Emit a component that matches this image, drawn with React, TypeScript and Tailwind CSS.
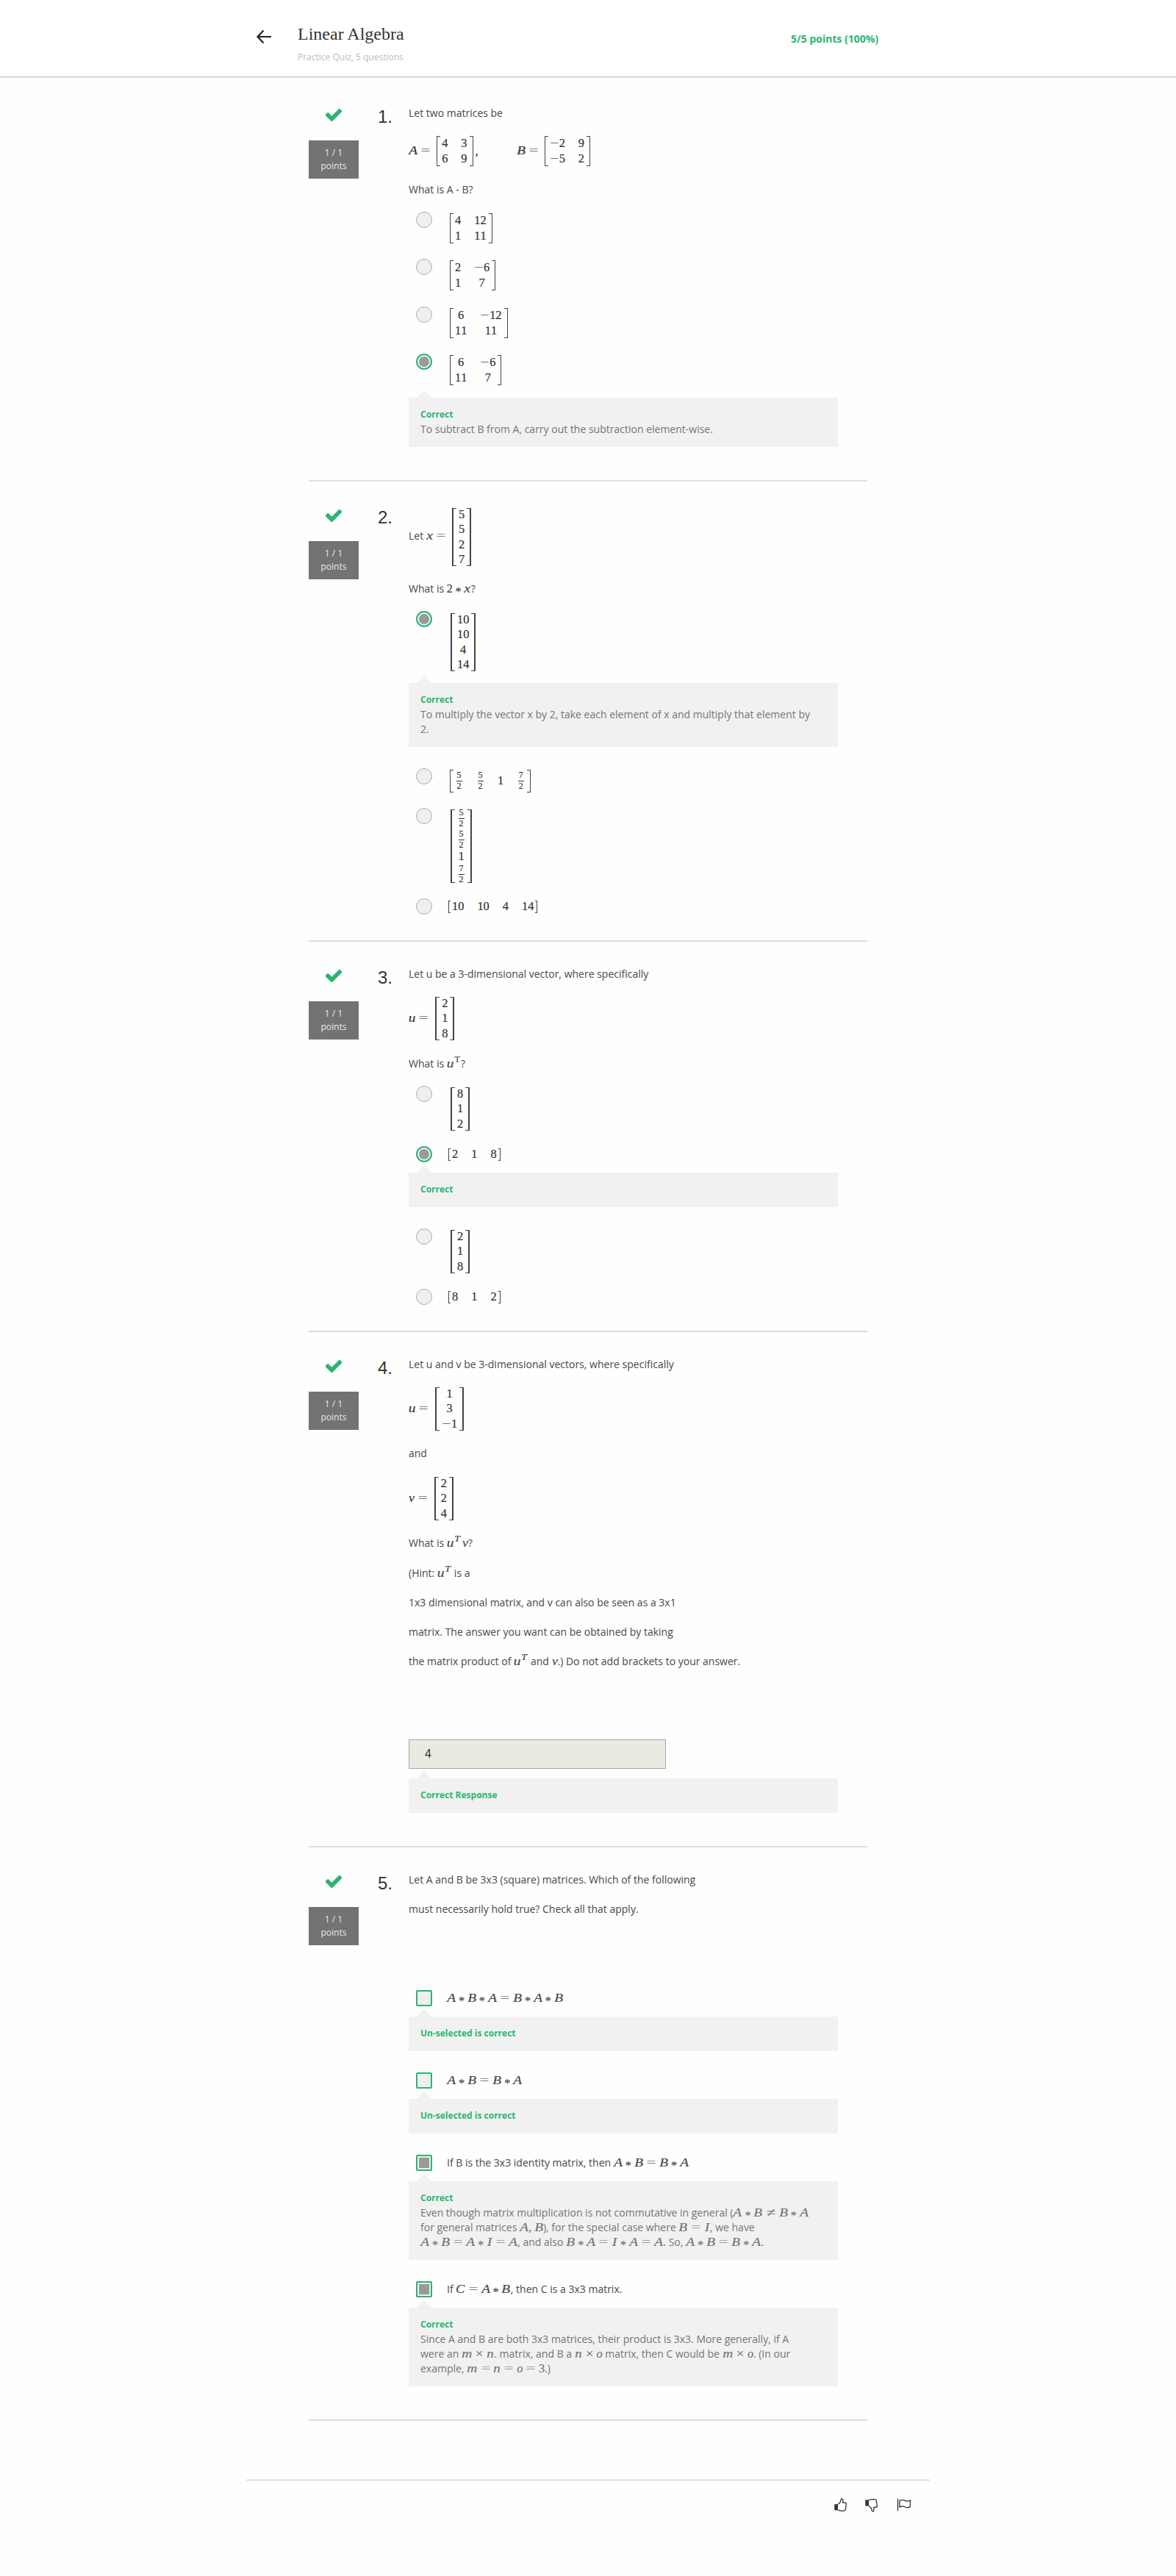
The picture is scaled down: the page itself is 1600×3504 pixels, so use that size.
import React from "react";
import type { ReactNode } from "react";

const GLYPHS: Record<string, string> = {
  A: "w-[0.75em] scale-x-[1.18] italic",
  B: "w-[0.76em] scale-x-[1.18] italic",
  C: "w-[0.76em] scale-x-[1.12] italic",
  I: "w-[0.5em] scale-x-[1.2] italic",
  m: "w-[0.878em] scale-x-[1.18] italic",
  n: "w-[0.6em] scale-x-[1.15] italic",
  o: "w-[0.485em] italic",
  u: "w-[0.57em] scale-x-[1.18] italic",
  v: "w-[0.485em] scale-x-[1.1] italic",
  x: "w-[0.57em] scale-x-[1.2] italic",
  "=": "w-[1.334em] scale-x-[1.35] opacity-70",
  "≠": "w-[1.334em] scale-x-[1.35]",
  "×": "w-[1.222em] scale-x-[1.15]",
  "−": "w-[0.778em] scale-x-[1.3] opacity-75",
  "*": "w-[0.944em] relative top-[0.22em]",
  ",": "w-[0.444em] text-left",
};

function M({ children }: { children: string }) {
  return (
    <span className="inline-block whitespace-nowrap font-['Liberation_Serif',serif] text-[16.4px] leading-none [-webkit-text-stroke:0.2px]">
      {children.split("").map((c, i) => (
        <span key={i} className={"inline-block text-center " + (GLYPHS[c] ?? "w-[0.5em]")}>
          {c}
        </span>
      ))}
    </span>
  );
}

function Sup({ upright = false }: { upright?: boolean }) {
  return (
    <span
      className={
        "inline-block w-[10px] text-center align-[7px] font-['Liberation_Serif',serif] text-[12px] leading-[0] [-webkit-text-stroke:0.2px] " +
        (upright ? "" : "scale-x-[1.15] italic")
      }
    >
      T
    </span>
  );
}

function Frac({ a, b }: { a: string; b: string }) {
  return (
    <span className="flex w-[11px] flex-col items-center text-[12px] leading-[13px] [-webkit-text-stroke:0.2px]">
      <span>{a}</span>
      <span className="mt-px h-px w-2 bg-[#333]" />
      <span>{b}</span>
    </span>
  );
}

type Cell = string | [string, string];

function Matrix({
  cols,
  height,
  kind = "thin",
  cell = "h-[20.5px]",
  className = "",
}: {
  cols: Cell[][];
  height: string;
  kind?: "thin" | "thick" | "row";
  cell?: string;
  className?: string;
}) {
  const edge =
    kind === "row"
      ? "w-[3px] border-y border-[#444]"
      : kind === "thin"
        ? "w-[5px] border-y border-[#444]"
        : "w-[6px] border-y border-[#444]";
  const side = kind === "thick" ? 2 : 1;
  const pad =
    kind === "row" ? "px-[2px]" : kind === "thin" ? "pl-[2px] pr-[3px]" : "px-[3px]";
  return (
    <span className={"inline-flex shrink-0 " + height + " " + className}>
      <span className={edge + (side === 2 ? " border-l-2" : " border-l")} />
      <span
        className={
          "flex items-center gap-[18px] font-['Liberation_Serif',serif] text-[16.4px] " + pad
        }
      >
        {cols.map((col, i) => (
          <span key={i} className="flex flex-col items-center">
            {col.map((c, j) => (
              <span
                key={j}
                className={
                  "flex items-center leading-[20px] " +
                  (typeof c === "string" ? cell : "h-[29.3px]")
                }
              >
                {typeof c === "string" ? <M>{c}</M> : <Frac a={c[0]} b={c[1]} />}
              </span>
            ))}
          </span>
        ))}
      </span>
      <span className={edge + (side === 2 ? " border-r-2" : " border-r")} />
    </span>
  );
}

function Question({
  n,
  height,
  children,
}: {
  n: number;
  height: string;
  children: ReactNode;
}) {
  return (
    <section
      className={
        "mx-auto flex w-[760px] border-b-2 border-[#dedede] pt-[34px] " + height
      }
    >
      <div className="flex w-[68px] flex-col items-center">
        <svg className="-mt-px text-[#2ab573]" width="26" height="26" viewBox="0 0 1792 1792" fill="currentColor">
          <path d="M1671 566q0 40-28 68l-724 724-136 136q-28 28-68 28t-68-28l-136-136-362-362q-28-28-28-68t28-68l136-136q28-28 68-28t68 28l294 295 656-657q28-28 68-28t68 28l136 136q28 28 28 68z" />
        </svg>
        <div className="mt-[22px] flex h-[52px] w-full flex-col items-center justify-center bg-[#737373] text-xs leading-[18px] text-[#e8e8e8]">
          <span>1 / 1</span>
          <span>points</span>
        </div>
      </div>
      <div className="ml-[26px] w-[42px] font-['Liberation_Sans',sans-serif] text-2xl leading-[29px] text-[#333]">
        {n}.
      </div>
      <div className="flex w-[584px] flex-col items-start">{children}</div>
    </section>
  );
}

function Line({ children, className = "" }: { children: ReactNode; className?: string }) {
  return (
    <p className={"h-5 whitespace-nowrap leading-5 text-[#484848] " + className}>{children}</p>
  );
}

function Equation({ children, className = "" }: { children: ReactNode; className?: string }) {
  return <div className={"flex items-center text-[#333] " + className}>{children}</div>;
}

function Option({
  height,
  checked = false,
  square = false,
  children,
}: {
  height: string;
  checked?: boolean;
  square?: boolean;
  children: ReactNode;
}) {
  const shape = square ? "rounded-[2px]" : "rounded-full";
  const ring =
    square || checked ? "border-2 border-[#2ab573]" : "border border-[#adadad]";
  return (
    <div className={"flex items-start pl-2.5 text-[#333] " + height}>
      <span
        className={
          "mr-5 flex size-[22px] shrink-0 items-center justify-center bg-[#efefef] " +
          shape +
          " " +
          ring
        }
      >
        {checked && (
          <span className={"size-3.5 bg-[#9a9a9a] " + (square ? "" : "rounded-full")} />
        )}
      </span>
      {children}
    </div>
  );
}

function Feedback({
  title = "Correct",
  children,
  className = "",
}: {
  title?: string;
  children?: ReactNode;
  className?: string;
}) {
  return (
    <div className={"relative w-full bg-[#f1f1f1] px-4 pt-[13px] pb-3.5 " + className}>
      <span className="absolute -top-2.5 left-[11px] border-x-[10px] border-b-[10px] border-x-transparent border-b-[#f1f1f1]" />
      <div className="h-5 text-xs leading-[20px] font-bold text-[#2ab573]">{title}</div>
      {children && <div className="whitespace-nowrap leading-5 text-[#757575]">{children}</div>}
    </div>
  );
}

export default function App() {
  return (
    <div className="h-[3504px] w-[1600px] bg-[#fefefe] font-['Open_Sans',sans-serif] text-sm">
      <header className="flex h-[105px] border-b border-[#c9c9c9] bg-white shadow-[0_1px_0_#e9e9e9]">
        <svg className="mt-10 ml-[348px]" width="22" height="20" viewBox="0 0 22 20" fill="none" stroke="#222" strokeWidth="2.2">
          <path d="M21 10H2.5M10.5 1.5L2.5 10L10.5 18.5" />
        </svg>
        <div className="ml-[35px] w-[671px]">
          <h1 className="mt-[32px] font-['Liberation_Serif',serif] text-[24px] leading-[28px] text-[#333]">
            Linear Algebra
          </h1>
          <p className="mt-2 text-xs leading-5 text-[#bdbdbd]">Practice Quiz, 5 questions</p>
        </div>
        <div className="mt-[43px] text-sm leading-5 font-bold text-[#2ab573]">5/5 points (100%)</div>
      </header>
      <main className="pt-[5px]">
        <Question n={1} height="h-[545px]">
          <Line>Let two matrices be</Line>
          <Equation className="mt-[21px]">
            <M>A=</M>
            <Matrix className="ml-1" height="h-[41px]" cols={[["4", "6"], ["3", "9"]]} />
            <span className="ml-[3px] w-[56px]">
              <M>,</M>
            </span>
            <M>B=</M>
            <Matrix className="ml-1" height="h-[41px]" cols={[["−2", "−5"], ["9", "2"]]} />
          </Equation>
          <Line className="mt-[22px]">What is A - B?</Line>
          <div className="mt-5">
            <Option height="h-16">
              <Matrix className="mt-0.5 ml-1" height="h-[41px]" cols={[["4", "1"], ["12", "11"]]} />
            </Option>
            <Option height="h-[65px]">
              <Matrix className="mt-0.5 ml-1" height="h-[41px]" cols={[["2", "1"], ["−6", "7"]]} />
            </Option>
            <Option height="h-16">
              <Matrix className="mt-0.5 ml-1" height="h-[41px]" cols={[["6", "11"], ["−12", "11"]]} />
            </Option>
            <Option height="h-[60px]" checked>
              <Matrix className="mt-0.5 ml-1" height="h-[41px]" cols={[["6", "11"], ["−6", "7"]]} />
            </Option>
          </div>
          <Feedback>To subtract B from A, carry out the subtraction element-wise.</Feedback>
        </Question>

        <Question n={2} height="h-[626px]">
          <Equation className="mt-0.5">
            <span className="mb-1 whitespace-pre text-[#484848]">
              Let <M>x=</M>
            </span>
            <Matrix className="ml-1" kind="thick" height="h-[79px]" cols={[["5", "5", "2", "7"]]} />
          </Equation>
          <Line className="mt-[21px]">
            What is <M>2*x</M>?
          </Line>
          <div className="mt-5">
            <Option height="h-[98px]" checked>
              <Matrix className="mt-[3px] ml-[5px]" kind="thick" height="h-[79px]" cols={[["10", "10", "4", "14"]]} />
            </Option>
          </div>
          <Feedback>
            To multiply the vector x by 2, take each element of x and multiply that element by
            <br />
            2.
          </Feedback>
          <div className="mt-[29px]">
            <Option height="h-[54px]">
              <Matrix
                className="mt-0.5 ml-1"
                height="h-[31px]"
                cols={[[["5", "2"]], [["5", "2"]], ["1"], [["7", "2"]]]}
              />
            </Option>
            <Option height="h-[123px]">
              <Matrix
                className="mt-0.5 ml-[5px]"
                kind="thick"
                height="h-[100px]"
                cell="h-[18px]"
                cols={[[["5", "2"], ["5", "2"], "1", ["7", "2"]]]}
              />
            </Option>
            <Option height="h-[22px]">
              <Matrix className="mt-[3px] ml-[2px]" kind="row" height="h-[17px]" cols={[["10"], ["10"], ["4"], ["14"]]} />
            </Option>
          </div>
        </Question>

        <Question n={3} height="h-[531px]">
          <Line>Let u be a 3-dimensional vector, where specifically</Line>
          <Equation className="mt-[21px]">
            <span className="mb-0.5">
              <M>u=</M>
            </span>
            <Matrix className="ml-[5px]" kind="thick" height="h-[59px]" cols={[["2", "1", "8"]]} />
          </Equation>
          <Line className="mt-[22px]">
            What is <M>u</M>
            <Sup upright />?
          </Line>
          <div className="mt-5">
            <Option height="h-[82px]">
              <Matrix className="mt-0.5 ml-[5px]" kind="thick" height="h-[59px]" cols={[["8", "1", "2"]]} />
            </Option>
            <Option height="h-9" checked>
              <Matrix className="mt-[3px] ml-[2px]" kind="row" height="h-[17px]" cols={[["2"], ["1"], ["8"]]} />
            </Option>
          </div>
          <Feedback />
          <div className="mt-[29px]">
            <Option height="h-[82px]">
              <Matrix className="mt-0.5 ml-[5px]" kind="thick" height="h-[59px]" cols={[["2", "1", "8"]]} />
            </Option>
            <Option height="h-[22px]">
              <Matrix className="mt-[3px] ml-[2px]" kind="row" height="h-[17px]" cols={[["8"], ["1"], ["2"]]} />
            </Option>
          </div>
        </Question>

        <Question n={4} height="h-[701px]">
          <Line>Let u and v be 3-dimensional vectors, where specifically</Line>
          <Equation className="mt-[21px]">
            <span className="mb-0.5">
              <M>u=</M>
            </span>
            <Matrix className="ml-[5px]" kind="thick" height="h-[59px]" cols={[["1", "3", "−1"]]} />
          </Equation>
          <Line className="mt-[21px]">and</Line>
          <Equation className="mt-[22px]">
            <span className="mb-0.5">
              <M>v=</M>
            </span>
            <Matrix className="ml-[5px]" kind="thick" height="h-[59px]" cols={[["2", "2", "4"]]} />
          </Equation>
          <Line className="mt-[21px]">
            What is <M>u</M>
            <Sup />
            <span className="ml-0.5">
              <M>v</M>
            </span>
            ?
          </Line>
          <Line className="mt-[21px]">
            (Hint: <M>u</M>
            <Sup /> is a
          </Line>
          <Line className="mt-5">1x3 dimensional matrix, and v can also be seen as a 3x1</Line>
          <Line className="mt-5">matrix. The answer you want can be obtained by taking</Line>
          <Line className="mt-5">
            the matrix product of <M>u</M>
            <Sup /> and <M>v</M>.) Do not add brackets to your answer.
          </Line>
          <div className="mt-24 flex h-10 w-[350px] items-center border border-[#a6a6a6] bg-[#ebeae2] pl-[21px] font-['Liberation_Sans',sans-serif] text-base text-[#333]">
            4
          </div>
          <Feedback className="mt-[13px]" title="Correct Response" />
        </Question>

        <Question n={5} height="h-[780px]">
          <Line>Let A and B be 3x3 (square) matrices. Which of the following</Line>
          <Line className="mt-5">must necessarily hold true? Check all that apply.</Line>
          <div className="mt-[100px]">
            <Option height="h-9" square>
              <Line className="mt-px"><M>A*B*A=B*A*B</M></Line>
            </Option>
          </div>
          <Feedback title="Un-selected is correct" />
          <div className="mt-[29px]">
            <Option height="h-9" square>
              <Line className="mt-px"><M>A*B=B*A</M></Line>
            </Option>
          </div>
          <Feedback title="Un-selected is correct" />
          <div className="mt-[29px]">
            <Option height="h-9" square checked>
              <Line className="mt-px">
                If B is the 3x3 identity matrix, then <M>A*B=B*A</M>
              </Line>
            </Option>
          </div>
          <Feedback>
            Even though matrix multiplication is not commutative in general (<M>A*B≠B*A</M>
            <br />
            for general matrices <M>A,B</M>), for the special case where <M>B=I</M>, we have
            <br />
            <M>A*B=A*I=A</M>, and also <M>B*A=I*A=A</M>. So, <M>A*B=B*A</M>.
          </Feedback>
          <div className="mt-[29px]">
            <Option height="h-9" square checked>
              <Line className="mt-px">
                If <M>C=A*B</M>, then C is a 3x3 matrix.
              </Line>
            </Option>
          </div>
          <Feedback>
            Since A and B are both 3x3 matrices, their product is 3x3. More generally, if A
            <br />
            were an <M>m×n</M>. matrix, and B a <M>n×o</M> matrix, then C would be <M>m×o</M>. (In our
            <br />
            example, <M>m=n=o=3</M>.)
          </Feedback>
        </Question>
      </main>
      <footer className="mx-auto mt-20 flex w-[930px] justify-end border-t border-[#c7c7c7] pt-6 pr-[25px] text-[#333]">
        <svg className="mr-[22px]" width="20" height="20" viewBox="0 0 20 20" fill="none" stroke="currentColor" strokeWidth="1.3" strokeLinejoin="round">
          <path d="M6 8.5L9 6L10.3 1.5Q12.8 -0.2 13 2.8L12.4 6L17.3 6.6L16.8 13L15.8 16.8L12 17.6L6 16.3" />
          <path d="M1.3 8.3H6V16.5H1.3Z" fill="currentColor" stroke="none" />
        </svg>
        <svg className="mr-6" width="20" height="20" viewBox="0 0 20 20" fill="none" stroke="currentColor" strokeWidth="1.3" strokeLinejoin="round">
          <path d="M6 2.7L12 1.6L15.8 2.2L16.8 6L17.3 12L12.4 12.8L13 16Q12.8 19 10.6 17.6L9 13.4L6 10.6" />
          <path d="M1.3 2.5H6V10.7H1.3Z" fill="currentColor" stroke="none" />
        </svg>
        <svg width="20" height="20" viewBox="0 0 20 20" fill="none" stroke="currentColor" strokeWidth="1.3">
          <path d="M1.5 1V17.6M4 3.6Q7.5 1.6 11 3.4T18.4 3V11.6Q15 13.8 11.2 12T4 12.4Z" />
        </svg>
      </footer>
    </div>
  );
}
